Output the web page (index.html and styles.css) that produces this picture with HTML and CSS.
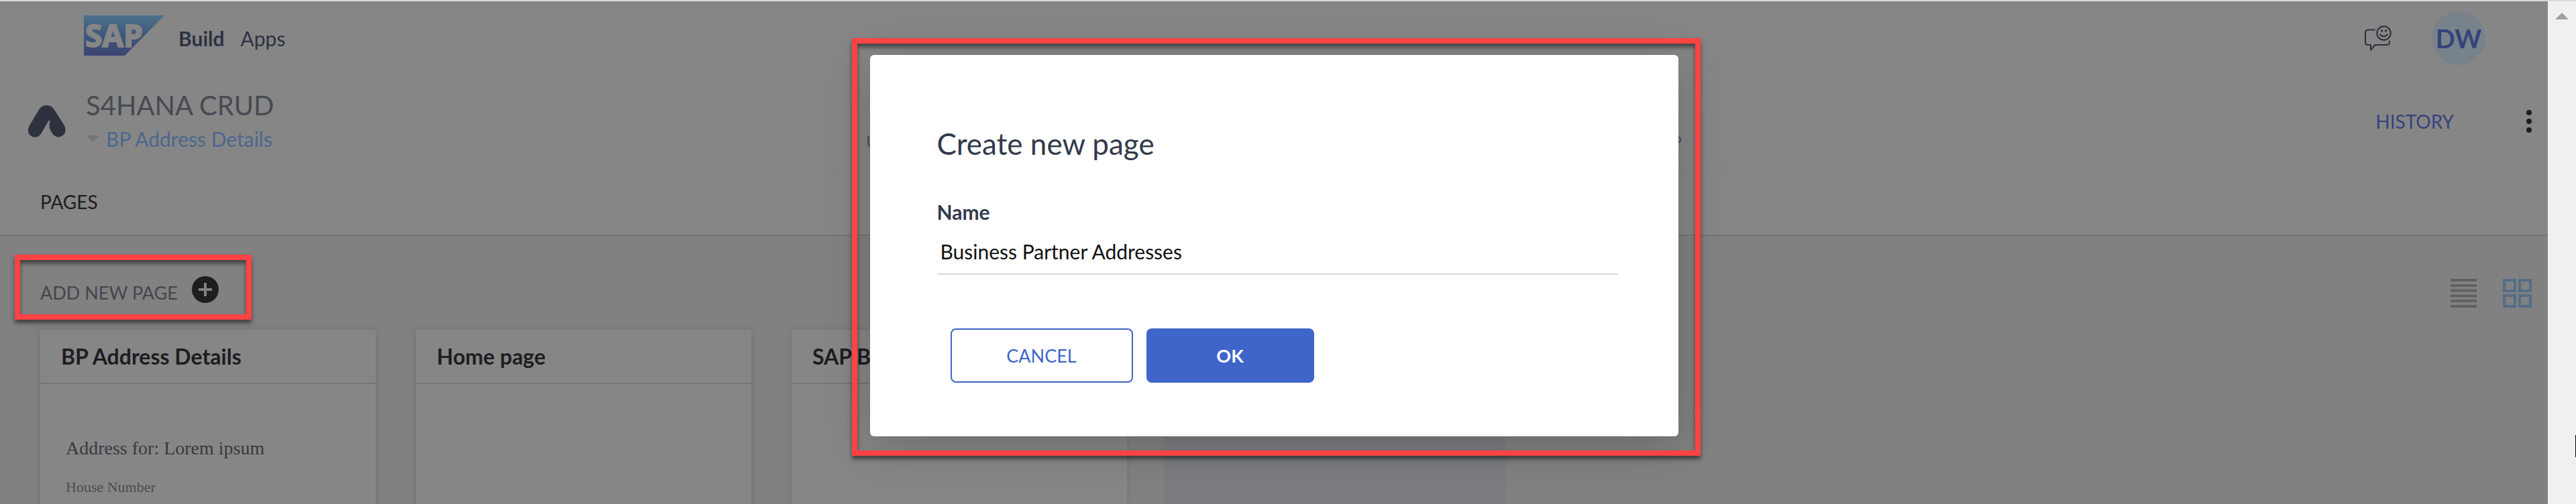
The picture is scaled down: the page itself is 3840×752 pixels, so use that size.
FILE: index.html
```
<!DOCTYPE html>
<html lang="en">
<head>
<meta charset="utf-8">
<title>SAP Build Apps</title>
<link rel="stylesheet" href="styles.css">
</head>
<body>
<div class="window">
  <div class="app">
    <header class="shell">
      <svg class="sap" viewBox="0 0 120 60" role="img" aria-label="SAP">
        <defs><linearGradient id="g" x1="0" y1="0" x2="0" y2="1"><stop offset="0" stop-color="#4b718a"/><stop offset=".5" stop-color="#40587c"/><stop offset="1" stop-color="#3a4470"/></linearGradient></defs>
        <path fill="url(#g)" d="M0 0h120L61 60H0z"/>
        <text class="sap-text" x="2" y="47">SAP</text>
      </svg>
      <div class="product"><strong>Build</strong><span>Apps</span></div>
      <button class="icon-button feedback" aria-label="Feedback">
        <svg width="40" height="38" viewBox="0 0 40 38" fill="none" stroke="#2c3038" stroke-width="2" stroke-linecap="round" stroke-linejoin="round">
          <path d="M15 6.500H5.500Q1 6.500 1 11V24.500Q1 29 5.500 29H9V36.500L15.500 29H32.500Q37 29 37 24.500V23.500"/>
          <circle cx="28.500" cy="11.500" r="10.200"/><path d="M23 13.500Q28.500 19 34 13.500"/>
          <circle cx="25.500" cy="8" r=".7"/><circle cx="31.500" cy="8" r=".7"/>
        </svg>
      </button>
      <button class="avatar">DW</button>
    </header>
    <section class="project">
      <svg class="app-logo" width="56" height="48" viewBox="0 0 56 48" fill="#2e323e"><path d="M16.500 6Q20.500 0 27.500 0T38.500 6L54 30.500Q58 39 52.500 44.500Q45.500 50 38.500 45Q36 43 32 34.500Q31 31 32.500 23.500Q31.500 21 30 24L19 43Q14.500 48.500 8 47.500Q-1 45 0 36Q.5 33 2 30z"/></svg>
      <div class="project-name">
        <h1>S4HANA CRUD</h1>
        <a href="#details" class="crumb"><svg width="20" height="10" viewBox="0 0 20 10"><path fill="#737577" d="M0 0h20L10 10z"/></svg>BP Address Details</a>
      </div>
      <nav class="modes"><a href="#ui">UI</a><a href="#app">APP</a></nav>
      <a href="#history" class="history">HISTORY</a>
      <button class="icon-button" aria-label="More"><svg width="8" height="36" viewBox="0 0 8 36" fill="#1d1d1f"><circle cx="4" cy="5" r="4"/><circle cx="4" cy="18" r="4"/><circle cx="4" cy="31" r="4"/></svg></button>
    </section>
    <nav class="tabs"><a href="#pages">PAGES</a></nav>
    <main class="pages">
      <div class="toolbar">
        <button class="add"><span>ADD NEW PAGE</span><svg width="40" height="40" viewBox="0 0 40 40"><circle cx="20" cy="20" r="20" fill="#1e1e20"/><path d="M20 10v20M10 20h20" stroke="#818182" stroke-width="4"/></svg></button>
        <div class="views">
          <button class="icon-button" aria-label="List view"><svg width="39" height="43" viewBox="0 0 39 43" stroke="#606163" stroke-width="4"><path d="M0 2h39M0 10h39M0 17.500h39M0 25.500h39M0 33h39M0 41h39"/></svg></button>
          <button class="icon-button" aria-label="Grid view"><svg width="43" height="43" viewBox="0 0 43 43" fill="none" stroke="#556d86" stroke-width="4"><path d="M2 2h16v16H2zM25 2h16v16H25zM2 25h16v16H2zM25 25h16v16H25z"/></svg></button>
        </div>
      </div>
      <div class="cards">
        <article class="card"><h2>BP Address Details</h2><div class="preview"><p>Address for: Lorem ipsum</p><small>House Number</small></div></article>
        <article class="card"><h2>Home page</h2></article>
        <article class="card"><h2>SAP B</h2></article>
        <article class="card empty"></article>
      </div>
    </main>
    <div class="mark mark-add"></div>
    <div class="overlay">
      <form class="dialog" role="dialog" aria-labelledby="dt">
        <h2 id="dt">Create new page</h2>
        <label for="name">Name</label>
        <input id="name" type="text" value="Business Partner Addresses">
        <div class="actions"><button type="button" class="cancel">CANCEL</button><button type="button" class="ok">OK</button></div>
        <div class="mark mark-dialog"></div>
      </form>
    </div>
  </div>
  <div class="scrollbar"><svg width="20" height="10" viewBox="0 0 20 10"><path fill="#a0a0a0" d="M0 10h20L10 0z"/></svg><i class="caret"></i></div>
</div>
</body>
</html>
```
FILE: styles.css
```
* { box-sizing: border-box; }
body { margin: 0; background: #818182; font-family: Lato, "Open Sans", sans-serif; font-size: 28px; overflow: hidden; }
h1, h2, p { margin: 0; font-weight: 400; }
a { color: inherit; text-decoration: none; }
button { font: inherit; color: inherit; background: none; border: 0; padding: 0; }
svg { display: block; flex: none; }
.window { display: flex; height: 100vh; border-top: 2px solid #d9d9db; }
.app { position: relative; flex: 1; min-width: 0; display: flex; flex-direction: column; background: #818182; overflow: hidden; }
.shell { display: flex; align-items: center; height: 110px; padding: 0 93px 0 125px; background: #868687; flex: none; }
.sap { width: 120px; height: 60px; margin-bottom: 8px; overflow: visible; }
.sap-text { font: 700 46px "Open Sans", sans-serif; fill: #868687; stroke: #868687; stroke-width: 2px; }
.product { display: flex; gap: 24px; margin-left: 21px; font-size: 30px; color: #2e323e; }
.icon-button { display: block; }
.feedback { margin-left: auto; }
.avatar { width: 80px; height: 80px; margin-left: 60px; border-radius: 50%; background: #77828a; color: #35437a; font-size: 38px; font-weight: 700; }
.project { position: relative; display: flex; align-items: center; height: 140px; padding: 0 24px 0 42px; background: #868687; border-bottom: 2px solid #828284; flex: none; }
.project-name { display: flex; flex-direction: column; gap: 4px; margin-left: 30px; }
h1 { font-size: 40px; line-height: 48px; color: #484a50; }
.crumb { display: flex; align-items: center; gap: 10px; font-size: 30px; line-height: 44px; color: #4b688c; }
.modes { position: absolute; left: 34%; right: 34%; bottom: 24px; display: flex; justify-content: space-between; font-size: 24px; line-height: 30px; color: #4a4c56; }
.history { margin-left: auto; margin-right: 108px; font-size: 28px; color: #35437a; }
.tabs { display: flex; align-items: center; height: 100px; padding: 0 60px; background: #868687; border-bottom: 2px solid #757577; font-size: 28px; color: #1d1d1f; flex: none; }
.pages { flex: 1; padding: 60px 24px 0 60px; }
.toolbar { display: flex; justify-content: space-between; height: 80px; }
.add { display: flex; gap: 21px; height: 40px; align-items: center; font-size: 27px; color: #45464c; }
.add span { padding-top: 8px; }
.views { display: flex; align-items: flex-start; gap: 39px; padding-top: 4px; }
.cards { display: flex; gap: 60px; }
.card { width: 500px; height: 600px; background: #868687; box-shadow: 0 0 8px rgba(90, 96, 100, .4); }
.card h2 { height: 81px; padding: 0 31px; border-bottom: 2px solid #757577; font-size: 32px; font-weight: 700; line-height: 80px; color: #1d1d1f; }
.empty { background: #7b7c80; }
.preview { padding: 79px 38px 0; font-family: "Liberation Serif", serif; color: #38393b; }
.preview p { font-size: 28px; line-height: 34px; }
.preview small { display: block; margin-top: 26px; font-size: 22px; line-height: 30px; color: #4c4d50; }
.overlay { position: absolute; inset: 0; display: flex; justify-content: center; align-items: flex-start; padding-top: 80px; }
.dialog { position: relative; width: 1205px; padding: 102px 90px 80px 100px; border-radius: 6px; background: #fff; box-shadow: 0 12px 70px rgba(0, 0, 0, .2); color: #323a4c; display: flex; flex-direction: column; }
.dialog h2 { font-size: 44px; line-height: 60px; }
.dialog label { margin-top: 52px; font-size: 30px; font-weight: 700; line-height: 40px; }
.dialog input { height: 74px; padding: 6px 5px 0; border: 0; border-bottom: 2px solid #d9d9de; outline: 0; font: 30px Lato, sans-serif; color: #111; background: none; }
.actions { display: flex; gap: 20px; margin: 80px 0 0 20px; }
.actions button { height: 81px; border-radius: 8px; font-size: 27px; }
.cancel { width: 272px; border: 2px solid #3f65ca; color: #3f65ca; }
.actions .ok { width: 250px; background: #3f65ca; color: #fff; font-weight: 700; }
.mark { position: absolute; border: 8px solid #ff4343; box-shadow: 0 5px 6px rgba(0, 0, 0, .5), inset 0 5px 6px rgba(0, 0, 0, .5); pointer-events: none; }
.mark-add { left: 22px; top: 378px; width: 353px; height: 97px; }
.mark-dialog { inset: -25px -33px -29px -27px; }
.scrollbar { position: relative; width: 42px; flex: none; background: #f0f0f0; padding: 17px 11px; }
.caret { position: absolute; right: 0; top: 647px; width: 1px; height: 33px; background: #000; }
```
